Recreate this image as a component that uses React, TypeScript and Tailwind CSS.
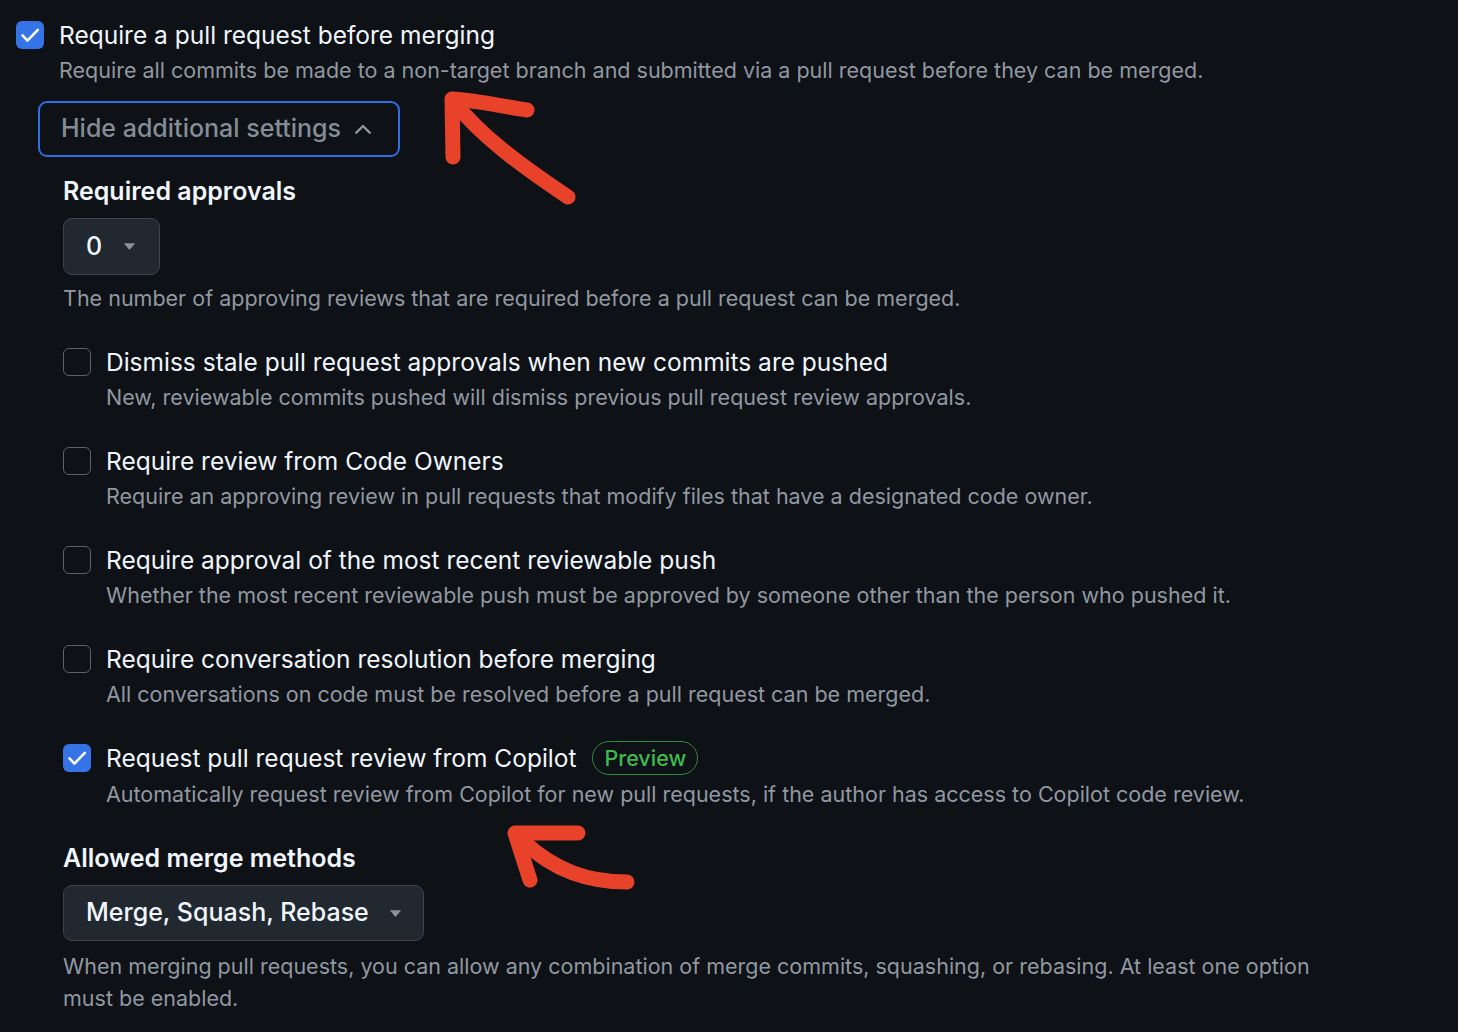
import React from "react";

const Check = () => (
  <svg viewBox="0 0 16 16" className="w-[24px] h-[24px]" fill="none">
    <path d="M3 8.3l3.3 3.4L13.2 4.6" stroke="white" strokeWidth="1.7" strokeLinecap="round" strokeLinejoin="round" />
  </svg>
);

const Checkbox = ({ checked }: { checked?: boolean }) =>
  checked ? (
    <div className="w-[28px] h-[28px] shrink-0 rounded-[6px] bg-[#3574e6] flex items-center justify-center mt-[4px]">
      <Check />
    </div>
  ) : (
    <div className="w-[28px] h-[28px] shrink-0 rounded-[6px] border-[1.5px] border-[#5b626b] mt-[4px]" />
  );

const Caret = () => (
  <svg viewBox="0 0 12 8" className="w-[15px] h-[9px]">
    <path d="M1 1h10L6 7z" fill="#8b929b" />
  </svg>
);

const Row = ({
  title,
  desc,
  checked,
  badge,
}: {
  title: string;
  desc: string;
  checked?: boolean;
  badge?: boolean;
}) => (
  <div className="flex gap-[15px]">
    <Checkbox checked={checked} />
    <div>
      <div className="flex items-center gap-[16px]">
        <span className="text-[24.5px] leading-[36px] text-[#f0f6fc]">{title}</span>
        {badge && (
          <span className="h-[34px] px-[11px] rounded-full border-[1.5px] border-[#2f8a3e] text-[#3fb950] text-[21.5px] leading-[30px] font-medium flex items-center">
            Preview
          </span>
        )}
      </div>
      <div className={`text-[21.5px] leading-[32px] text-[#9198a1] ${badge ? "mt-[2px]" : "mt-[1px]"}`}>{desc}</div>
    </div>
  </div>
);

export default function App() {
  return (
    <div
      className="relative min-h-screen w-full bg-[#0e1116] overflow-hidden"
      style={{ fontFamily: "Inter, 'Noto Sans', sans-serif" }}
    >
      <div className="pt-[17px] pl-[16px]">
        <div className="flex gap-[15px]">
          <Checkbox checked />
          <div>
            <div className="text-[24.5px] leading-[36px] text-[#f0f6fc]">Require a pull request before merging</div>
            <div className="mt-[1px] text-[21.5px] leading-[32px] text-[#9198a1]">
              Require all commits be made to a non-target branch and submitted via a pull request before they can be merged.
            </div>
          </div>
        </div>

        <button className="mt-[15px] ml-[22px] w-[362px] h-[56px] rounded-[9px] border-2 border-[#2f6fe4] flex items-center pl-[21px] gap-[10px] text-[25px] font-medium text-[#848d97]">
          <span>Hide additional settings</span>
          <svg viewBox="0 0 16 16" className="w-[24px] h-[24px]" fill="none">
            <path d="M3.5 10.5L8 6l4.5 4.5" stroke="#9198a1" strokeWidth="1.6" strokeLinecap="round" strokeLinejoin="round" />
          </svg>
        </button>

        <div className="ml-[47px] mt-[16px]">
          <div className="text-[25px] leading-[36px] font-semibold text-[#f0f6fc]">Required approvals</div>
          <div className="mt-[9px] w-[97px] h-[57px] rounded-[9px] border border-[#3d444d] bg-[#212830] flex items-center pl-[22px] gap-[20px]">
            <span className="text-[25px] font-medium text-[#f0f6fc]">0</span>
            <Caret />
          </div>
          <div className="mt-[7px] text-[21.5px] leading-[32px] text-[#9198a1]">
            The number of approving reviews that are required before a pull request can be merged.
          </div>

          <div className="mt-[30px] flex flex-col gap-[30px]">
            <Row
              title="Dismiss stale pull request approvals when new commits are pushed"
              desc="New, reviewable commits pushed will dismiss previous pull request review approvals."
            />
            <Row
              title="Require review from Code Owners"
              desc="Require an approving review in pull requests that modify files that have a designated code owner."
            />
            <Row
              title="Require approval of the most recent reviewable push"
              desc="Whether the most recent reviewable push must be approved by someone other than the person who pushed it."
            />
            <Row
              title="Require conversation resolution before merging"
              desc="All conversations on code must be resolved before a pull request can be merged."
            />
            <Row
              checked
              badge
              title="Request pull request review from Copilot"
              desc="Automatically request review from Copilot for new pull requests, if the author has access to Copilot code review."
            />
          </div>

          <div className="mt-[30px] text-[25px] leading-[36px] font-semibold text-[#f0f6fc]">Allowed merge methods</div>
          <div className="mt-[9px] w-[361px] h-[56px] rounded-[9px] border border-[#3d444d] bg-[#212830] flex items-center pl-[22px] gap-[19px]">
            <span className="text-[25px] font-medium text-[#f0f6fc]">Merge, Squash, Rebase</span>
            <Caret />
          </div>
          <div className="mt-[9px] max-w-[1260px] text-[21.5px] leading-[32px] text-[#9198a1]">
            When merging pull requests, you can allow any combination of merge commits, squashing, or rebasing. At least one option must be enabled.
          </div>
        </div>
      </div>

      <svg className="absolute left-0 top-0 pointer-events-none" width="1458" height="1032" fill="none">
        <g stroke="#e8432a" strokeWidth="15" strokeLinecap="round" strokeLinejoin="round">
          <path d="M568 197 C 520 165, 480 135, 455 103" />
          <path d="M527 110 C 500 106, 475 100, 452 99 L 453 157" />
          <path d="M627 882 C 590 882, 555 872, 522 840" />
          <path d="M578 833 L 515 833 L 530 880" />
        </g>
      </svg>
    </div>
  );
}
